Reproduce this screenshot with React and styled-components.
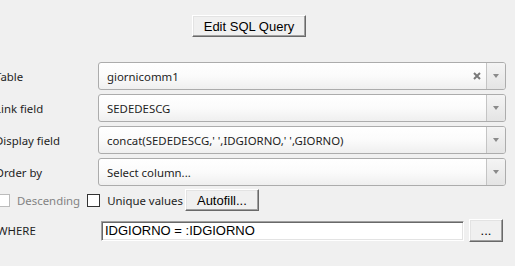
import React from 'react';
import styled, { createGlobalStyle } from 'styled-components';

const GlobalStyle = createGlobalStyle`
  html, body {
    margin: 0;
    padding: 0;
    background: #f0f0f0;
  }
  body {
    font-family: "Noto Sans", "Segoe UI", sans-serif;
    font-size: 11.4px;
    color: #1e1e1e;
  }
`;

const Page = styled.div`
  width: 515px;
  height: 266px;
  overflow: hidden;
  display: flex;
  flex-direction: column;
  background: #f0f0f0;
`;

const TopBar = styled.div`
  display: flex;
  padding: 15px 0 0 192px;
`;

const ClassicButton = styled.button`
  box-sizing: border-box;
  width: ${p => p.$w}px;
  height: ${p => p.$h || 22}px;
  padding: 0;
  margin: 0;
  background: #f0f0f0;
  border: 1px solid;
  border-color: #ffffff #696969 #696969 #ffffff;
  box-shadow: inset -1px -1px 0 #a0a0a0, inset 1px 1px 0 #e3e3e3;
  font-family: "Liberation Sans", Arial, sans-serif;
  font-size: 13px;
  color: #000;
  display: flex;
  align-items: center;
  justify-content: center;
`;

const Form = styled.div`
  display: grid;
  grid-template-columns: 103px 408px;
  row-gap: 4px;
  margin: 25px 0 0 -5px;
`;

const Label = styled.div`
  display: flex;
  align-items: center;
  height: 28px;
  color: #1e1e1e;
  white-space: nowrap;
`;

const Combo = styled.div`
  box-sizing: border-box;
  height: 28px;
  display: flex;
  border: 1px solid #acacac;
  border-radius: 3px;
  background: linear-gradient(#ffffff 0%, #fbfbfb 50%, #efefef 100%);
`;

const ComboText = styled.div`
  flex: 1;
  display: flex;
  align-items: center;
  padding-left: 8px;
  color: #1e1e1e;
  white-space: nowrap;
  overflow: hidden;
`;

const ClearIcon = styled.div`
  width: 18px;
  display: flex;
  align-items: center;
  justify-content: center;
`;

const DropButton = styled.div`
  width: 18px;
  border-left: 1px solid #c4c4c4;
  background: linear-gradient(#f4f4f4, #e4e4e4);
  border-radius: 0 2px 2px 0;
  display: flex;
  align-items: center;
  justify-content: center;
`;

const Arrow = styled.div`
  width: 0;
  height: 0;
  border-left: 3px solid transparent;
  border-right: 3px solid transparent;
  border-top: 4px solid #8a8a8a;
`;

const CheckRow = styled.div`
  display: flex;
  align-items: center;
  height: 22px;
  margin: 3px 0 0 -3px;
`;

const CheckItem = styled.label`
  display: flex;
  align-items: center;
  gap: 7px;
  margin-right: ${p => p.$mr}px;
  color: ${p => (p.$disabled ? '#838383' : '#1e1e1e')};
`;

const Box = styled.span`
  box-sizing: border-box;
  width: 13px;
  height: 13px;
  background: #fff;
  border: 1px solid ${p => (p.$disabled ? '#bcbcbc' : '#333333')};
`;

const WhereRow = styled.div`
  display: flex;
  align-items: center;
  margin: 8px 0 0 -3px;
  height: 23px;
`;

const WhereLabel = styled.div`
  width: 104px;
  color: #1e1e1e;
`;

const TextInput = styled.div`
  box-sizing: border-box;
  width: 363px;
  height: 20px;
  background: #fff;
  border: 1px solid;
  border-color: #a0a0a0 #ffffff #ffffff #a0a0a0;
  box-shadow: inset 1px 1px 0 #696969, inset -1px -1px 0 #e3e3e3;
  font-family: "Liberation Sans", Arial, sans-serif;
  font-size: 13px;
  color: #000;
  display: flex;
  align-items: center;
  padding-left: 3px;
  margin-right: 5px;
  white-space: nowrap;
`;

const rows = [
  { label: 'Table', value: 'giornicomm1', clear: true },
  { label: 'Link field', value: 'SEDEDESCG' },
  { label: 'Display field', value: "concat(SEDEDESCG,' ',IDGIORNO,' ',GIORNO)" },
  { label: 'Order by', value: 'Select column...' },
];

const App = () => (
  <>
    <GlobalStyle />
    <Page>
      <TopBar>
        <ClassicButton $w={114}>Edit SQL Query</ClassicButton>
      </TopBar>
      <Form>
        {rows.map(r => (
          <React.Fragment key={r.label}>
            <Label>{r.label}</Label>
            <Combo>
              <ComboText>{r.value}</ComboText>
              {r.clear && (
                <ClearIcon>
                  <svg width="8" height="8" viewBox="0 0 8 8">
                    <path d="M1 1L7 7M7 1L1 7" stroke="#7a7a7a" strokeWidth="2" />
                  </svg>
                </ClearIcon>
              )}
              <DropButton>
                <Arrow />
              </DropButton>
            </Combo>
          </React.Fragment>
        ))}
      </Form>
      <CheckRow>
        <CheckItem $disabled $mr={7}>
          <Box $disabled />
          Descending
        </CheckItem>
        <CheckItem $mr={2}>
          <Box />
          Unique values
        </CheckItem>
        <ClassicButton $w={74}>Autofill...</ClassicButton>
      </CheckRow>
      <WhereRow>
        <WhereLabel>WHERE</WhereLabel>
        <TextInput>IDGIORNO = :IDGIORNO</TextInput>
        <ClassicButton $w={34} $h={23}>...</ClassicButton>
      </WhereRow>
    </Page>
  </>
);

export default App;
